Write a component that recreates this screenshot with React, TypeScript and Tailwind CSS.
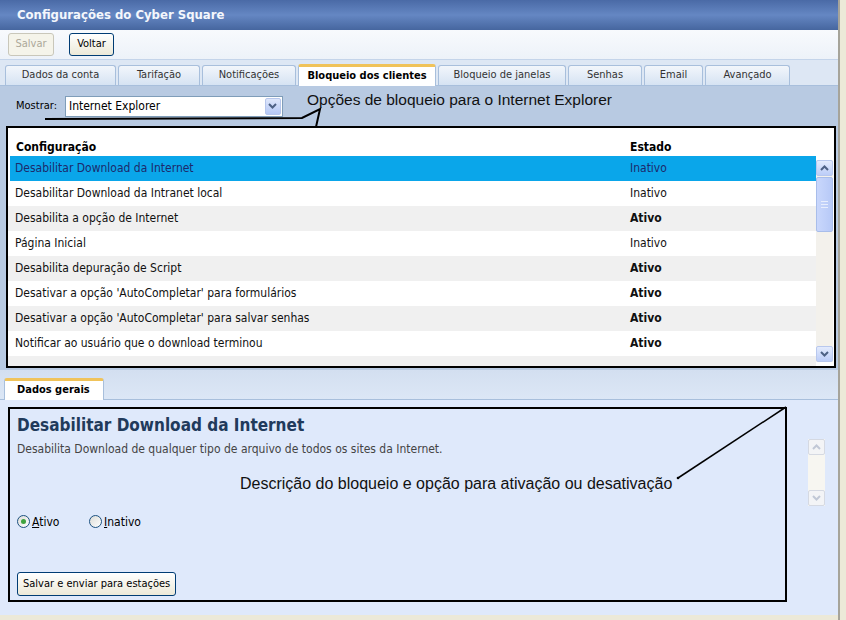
import React from 'react';

const ui = '"DejaVu Sans Condensed", "DejaVu Sans", sans-serif';
const arial = '"Liberation Sans", Arial, sans-serif';

const topTabs = [
  { name: 'Dados da conta', w: 111 },
  { name: 'Tarifação', w: 82 },
  { name: 'Notificações', w: 94 },
  { name: 'Bloqueio dos clientes', w: 138, active: true },
  { name: 'Bloqueio de janelas', w: 128 },
  { name: 'Senhas', w: 74 },
  { name: 'Email', w: 59 },
  { name: 'Avançado', w: 85 },
];

const rows = [
  { name: 'Desabilitar Download da Internet', state: 'Inativo' },
  { name: 'Desabilitar Download da Intranet local', state: 'Inativo' },
  { name: 'Desabilita a opção de Internet', state: 'Ativo' },
  { name: 'Página Inicial', state: 'Inativo' },
  { name: 'Desabilita depuração de Script', state: 'Ativo' },
  { name: "Desativar a opção 'AutoCompletar' para formulários", state: 'Ativo' },
  { name: "Desativar a opção 'AutoCompletar' para salvar senhas", state: 'Ativo' },
  { name: 'Notificar ao usuário que o download terminou', state: 'Ativo' },
];

const Arrow: React.FC<{ up?: boolean; color?: string }> = ({ up, color = '#4d6185' }) => (
  <svg width="9" height="6" viewBox="0 0 9 6">
    <path d={up ? 'M1 5 L4.5 1.5 L8 5' : 'M1 1 L4.5 4.5 L8 1'} fill="none" stroke={color} strokeWidth="2" />
  </svg>
);

const Radio: React.FC<{ checked?: boolean }> = ({ checked }) => (
  <span className="w-[13px] h-[13px] rounded-full border border-[#1c5180] bg-gradient-to-br from-[#dcdcd7] to-white flex items-center justify-center">
    {checked && <span className="w-[5px] h-[5px] rounded-full bg-[#3fa33f]" />}
  </span>
);

export default function App() {
  return (
    <div className="w-[846px] h-[620px] flex bg-[#ece9d8] overflow-hidden relative" style={{ fontFamily: ui }}>
      <div className="w-[838px] flex flex-col h-[615px]">
        {/* title */}
        <div className="h-[30px] flex items-center px-[17px] bg-gradient-to-b from-[#4a6aa6] via-[#6587c3] to-[#46669f] text-[#f4f7fc] text-[13px] font-bold">
          Configurações do Cyber Square
        </div>

        {/* toolbar */}
        <div className="h-[30px] flex items-center gap-[15px] pl-[8px] bg-gradient-to-b from-[#f8fafd] to-[#edf2f9] border-b border-[#c4d4ea]">
          <button className="h-[23px] w-[46px] rounded-[3px] border border-[#c9c7ba] bg-[#f5f4ea] text-[11px] text-[#aca899]">Salvar</button>
          <button className="h-[23px] w-[45px] rounded-[3px] border border-[#003c74] bg-gradient-to-b from-white to-[#ece9d8] text-[11px] text-black">Voltar</button>
        </div>

        {/* top tabs */}
        <div className="h-[26px] flex items-end pl-[5px] gap-[2px] bg-[#dde7f4] border-b border-[#a8bfdc]">
          {topTabs.map((t) =>
            t.active ? (
              <div
                key={t.name}
                className="h-[22px] flex items-center justify-center bg-white border border-b-0 border-[#a8bfdc] border-t-[3px] border-t-[#f0c35a] rounded-t-[3px] text-[11px] font-bold text-black -mb-px"
                style={{ width: t.w }}
              >
                {t.name}
              </div>
            ) : (
              <div
                key={t.name}
                className="h-[20px] flex items-center justify-center bg-gradient-to-b from-[#f2f6fb] to-[#d6e3f3] border border-b-0 border-[#a8bfdc] rounded-t-[3px] text-[11px] text-[#333]"
                style={{ width: t.w }}
              >
                {t.name}
              </div>
            )
          )}
        </div>

        {/* upper panel */}
        <div className="bg-[#b8cae2] flex flex-col pl-[6px] pr-[2px] pb-[2px]">
          <div className="h-[40px] flex items-center pl-[10px] gap-[8px]">
            <span className="text-[11px] text-black">Mostrar:</span>
            <div className="w-[218px] h-[21px] bg-white border border-[#7f9db9] flex items-center justify-between pl-[3px] pr-[1px]">
              <span className="text-[12px] text-black">Internet Explorer</span>
              <span className="w-[16px] h-[17px] rounded-[2px] bg-gradient-to-b from-[#dfe7fb] to-[#b5c8f6] border border-[#b6c6ec] flex items-center justify-center">
                <Arrow />
              </span>
            </div>
            <span className="ml-[16px] -mt-[13px] text-[15.5px] text-[#111]" style={{ fontFamily: arial }}>
              Opções de bloqueio para o Internet Explorer
            </span>
          </div>

          <div className="h-[242px] border-2 border-black bg-white flex flex-col">
            <div className="h-[28px] flex items-end text-[12px] font-bold text-black">
              <span className="pl-[8px] w-[622px]">Configuração</span>
              <span>Estado</span>
            </div>
            <div className="flex flex-1 min-h-0">
              <div className="flex-1 flex flex-col">
                {rows.map((r, i) => (
                  <div
                    key={r.name}
                    className={
                      'h-[25px] flex items-center text-[12px] pb-[1px] ' +
                      (i === 0
                        ? 'bg-[#0aa6ea] text-[#1d2a6b] ml-[2px]'
                        : i % 2 === 0
                        ? 'bg-[#f0f0f0] text-[#111]'
                        : 'bg-white text-[#111]')
                    }
                  >
                    <span className={i === 0 ? 'pl-[5px] w-[620px]' : 'pl-[7px] w-[622px]'}>{r.name}</span>
                    <span className={r.state === 'Ativo' ? 'font-bold' : ''}>{r.state}</span>
                  </div>
                ))}
                <div className="flex-1 bg-[#f0f0f0]" />
              </div>
              <div className="w-[17px] flex flex-col bg-[#f3f1ec] mt-[4px] mb-[4px] mr-[1px]">
                <div className="h-[16px] rounded-[2px] bg-gradient-to-b from-[#e3ebfd] to-[#bccdf8] border border-[#b8c8ee] flex items-center justify-center">
                  <Arrow up />
                </div>
                <div className="h-[55px] mt-[1px] rounded-[2px] bg-gradient-to-r from-[#c9d7fc] to-[#b7c9f7] border border-[#a8bdea] flex flex-col items-center justify-center gap-[2px]">
                  <span className="w-[7px] h-px bg-[#e8eefd]" />
                  <span className="w-[7px] h-px bg-[#e8eefd]" />
                  <span className="w-[7px] h-px bg-[#e8eefd]" />
                </div>
                <div className="flex-1" />
                <div className="h-[16px] rounded-[2px] bg-gradient-to-b from-[#e3ebfd] to-[#bccdf8] border border-[#b8c8ee] flex items-center justify-center">
                  <Arrow />
                </div>
              </div>
            </div>
          </div>
        </div>

        {/* lower tabs */}
        <div className="h-[30px] flex items-end pl-[4px] bg-gradient-to-b from-[#d3dff0] to-[#dce7f6] border-b border-[#a8bfdc]">
          <div className="w-[100px] h-[22px] flex items-center pl-[12px] bg-white border border-b-0 border-[#a8bfdc] border-t-[3px] border-t-[#f0c35a] rounded-t-[3px] text-[11px] font-bold text-black -mb-px">
            Dados gerais
          </div>
        </div>

        {/* lower panel */}
        <div className="flex-1 bg-[#dfe9fb] flex pl-[8px] pt-[7px] pb-[13px]">
          <div className="w-[779px] border-2 border-black flex flex-col pl-[7px] pt-[4px] pb-[4px]">
            <div className="text-[17px] font-bold text-[#213a5b]">Desabilitar Download da Internet</div>
            <div className="text-[12px] text-[#444] mt-[1px]">Desabilita Download de qualquer tipo de arquivo de todos os sites da Internet.</div>
            <div className="text-[16px] text-[#111] mt-[14px] pl-[223px]" style={{ fontFamily: arial }}>
              Descrição do bloqueio e opção para ativação ou desativação
            </div>
            <div className="flex items-center mt-[17px] text-[12px] text-black">
              <span className="flex items-center gap-[2px] w-[72px]">
                <Radio checked />
                <span><u>A</u>tivo</span>
              </span>
              <span className="flex items-center gap-[2px]">
                <Radio />
                <span><u>I</u>nativo</span>
              </span>
            </div>
            <div className="flex-1" />
            <div>
              <button className="h-[24px] px-[5px] rounded-[3px] border border-[#003c74] bg-gradient-to-b from-white to-[#ece9d8] text-[11px] text-black">
                Salvar e enviar para estações
              </button>
            </div>
          </div>
          <div className="ml-[21px] mt-[32px] w-[17px] h-[67px] flex flex-col bg-[#f7f6f1]">
            <div className="h-[16px] rounded-[2px] border border-[#d5d9e2] bg-[#f3f4f6] flex items-center justify-center">
              <Arrow up color="#c1c8d6" />
            </div>
            <div className="flex-1" />
            <div className="h-[16px] rounded-[2px] border border-[#d5d9e2] bg-[#f3f4f6] flex items-center justify-center">
              <Arrow color="#c1c8d6" />
            </div>
          </div>
        </div>
      </div>

      <div className="w-[8px] border-l-2 border-[#a6a49a] bg-[#ece9d8]" />

      {/* annotation leader lines */}
      <svg className="absolute left-0 top-0 pointer-events-none" width="846" height="620">
        <polyline points="45,119 302,118 320,109 316,127" fill="none" stroke="#000" strokeWidth="2" />
        <line x1="678" y1="478" x2="786" y2="407" stroke="#000" strokeWidth="1.5" />
        <circle cx="678" cy="478" r="1.3" fill="#000" />
      </svg>
    </div>
  );
}
